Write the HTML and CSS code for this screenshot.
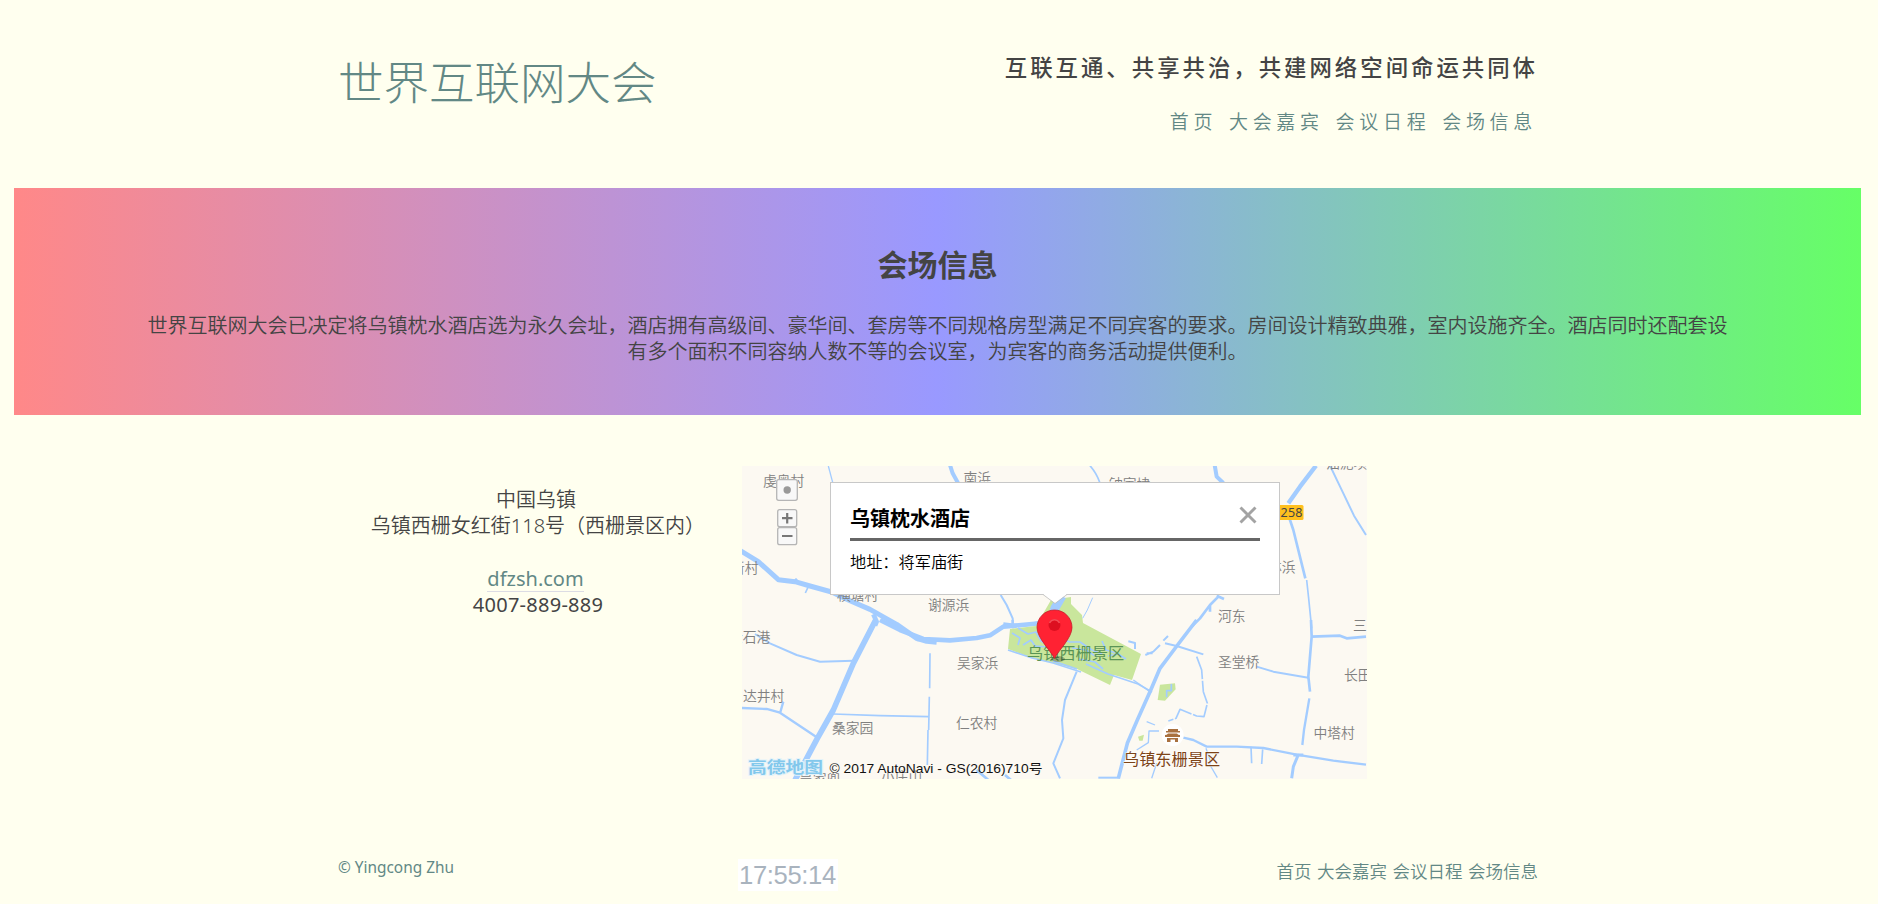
FILE: index.html
```html
<!DOCTYPE html>
<html lang="zh-CN">
<head>
<meta charset="utf-8">
<title>世界互联网大会</title>
<link rel="stylesheet" href="styles.css">
</head>
<body>
<header class="header wrap">
  <h1 class="title">世界互联网大会</h1>
  <div class="header-right">
    <p class="slogan">互联互通、共享共治，共建网络空间命运共同体</p>
    <nav class="nav"><a>首页</a><a>大会嘉宾</a><a>会议日程</a><a>会场信息</a></nav>
  </div>
</header>
<section class="banner">
  <h2 class="banner-title">会场信息</h2>
  <p class="banner-text">世界互联网大会已决定将乌镇枕水酒店选为永久会址，酒店拥有高级间、豪华间、套房等不同规格房型满足不同宾客的要求。房间设计精致典雅，室内设施齐全。酒店同时还配套设<br>有多个面积不同容纳人数不等的会议室，为宾客的商务活动提供便利。</p>
</section>
<main class="main wrap">
  <div class="contact">
    <p class="city">中国乌镇</p>
    <p>乌镇西栅女红街118号（西栅景区内）</p>
    <p class="contact-site"><a class="site">dfzsh.com</a></p>
    <p class="phone">4007-889-889</p>
  </div>
  <div class="map">
    <svg class="map-canvas" width="625" height="313" viewBox="0 0 625 313">
      <rect width="625" height="313" fill="#fcf9f2"/>
      <!-- north-west tile -->
      <g class="river" transform="translate(-12 -11) scale(.33333)">
        <path d="M295 33L308 82" stroke-width="4"/>
        <path d="M660 30L668 55L684 84" stroke-width="12"/>
        <path d="M30 286L85 320L145 374L195 380L240 393L305 411L355 435L420 463L500 508L560 550L590 559L620 562" stroke-width="15"/>
        <path d="M190 382l8-10 10 12M238 388l-12 26" stroke-width="5"/>
        <path d="M430 478L440 500L435 512" stroke-width="14"/>
        <path d="M812 420L830 450L848 490L850 520" stroke-width="6"/>
        <path d="M820 506L870 512L925 503" stroke-width="9"/>
      </g>
      <!-- south-west tile -->
      <g class="river" transform="translate(-12 154) scale(.33333)">
        <path d="M437 0L370 130L310 270L262 355L225 425L195 480" stroke-width="17"/>
        <path d="M450 0L510 30L580 57L660 61L740 54L780 46L820 20L930 10" stroke-width="14"/>
        <path d="M848 0v20M560 60h30" stroke-width="8"/>
        <path d="M75 42L120 70L200 105L270 125L370 122" stroke-width="6"/>
        <path d="M34 264L110 267L150 278L258 350M150 280L160 245" stroke-width="7"/>
        <path d="M310 282L450 287L596 290" stroke-width="5"/>
        <path d="M600 100L599 205M598 230L596 330M594 330L592 435" stroke-width="5"/>
        <path d="M740 450L775 480M825 465l18 15" stroke-width="8"/>
      </g>
      <!-- scenic area -->
      <path d="M268 163L294 160L309 134L329 131L329 138L340 149L341 157L399 188L390 214L372 209L368 219L335 203L290 192L266 183Z" fill="#c9e69c"/>
      <g class="river">
        <path d="M320 130l-7 12-3 10" stroke-width="9"/>
        <path d="M276 162l10 6 8-2 5 9 7 4M281 179l8-5 4 6 12 1M316 172l12 4 10 0 12 8 10 4M330 182l14 2 9 6M337 193l16 3 8 7M311 195l24 8M360 175l4 9 10 3M270 167l8 5-2 7" stroke-width="1.7"/>
        <path d="M344 198l22 10 30 10 14 8M366 190l10-2 8 5M266 184l24 8 21 5 28 9" stroke-width="1.6"/>
      </g>
      <!-- north-east tile -->
      <g class="river" transform="translate(308 -11) scale(.33333)">
        <path d="M120 32Q140 55 149 82" stroke-width="5"/>
        <path d="M494 30L500 65L520 84" stroke-width="12"/>
        <path d="M798 32L750 95L715 145" stroke-width="13"/>
        <path d="M715 180L730 225L766 370" stroke-width="8"/>
        <path d="M770 375L776 430L785 520" stroke-width="5"/>
        <path d="M840 32L880 115L912 182L948 240" stroke-width="6"/>
        <path d="M508 422L480 450L450 490L425 515M480 450v20M500 422l22 10" stroke-width="8"/>
        <path d="M128 428L112 465L98 490" stroke-width="3"/>
      </g>
      <!-- south-east tile -->
      <g class="river" transform="translate(308 154) scale(.33333)">
        <path d="M440 0L385 72L330 145L300 215L262 300L232 370L205 475" stroke-width="11"/>
        <path d="M380 78L460 103M620 140L670 155L775 173" stroke-width="6"/>
        <path d="M286 105L310 95L330 75M290 100l18 0M340 62l14-14M345 70l35 8M235 64l20 5v18" stroke-width="6"/>
        <path d="M250 180L300 215" stroke-width="4"/>
        <path d="M783 0L785 50L775 170L780 215" stroke-width="8"/>
        <path d="M785 50L870 47L890 55L948 50" stroke-width="8"/>
        <path d="M778 235L762 330L757 375" stroke-width="7"/>
        <path d="M400 353L430 360L470 380L560 380L640 384L740 404L850 422L948 434" stroke-width="7"/>
        <path d="M745 404L730 440L725 475M730 405h30" stroke-width="9"/>
        <path d="M603 380L605 430M638 388L635 432" stroke-width="5"/>
        <path d="M80 155L45 240L36 300L40 355L10 430L30 475" stroke-width="6"/>
        <path d="M440 110L455 150L460 215L472 250L462 290L440 288L390 268L378 295L355 303" stroke-width="5" stroke-dasharray="70 5"/>
        <path d="M290 305l25 10M260 390l35-22 2-35 30 0M468 385l12 35 0 15 22 38M320 430l-15 45" stroke-width="4"/>
        <path d="M145 473L210 473" stroke-width="6"/>
        <path d="M330 194L375 190L377 208L345 242L323 240Z" fill="#c9e69c" stroke="none"/>
        <path d="M350 232v-20l14 0v-20" stroke-width="5"/>
        <path d="M264 350l18-6-4 18-10 0z" fill="#c9e69c" stroke="none"/>
      </g>
      <g class="place">
        <text x="21" y="19.500">虔奥村</text>
        <text x="221.500" y="16.500">南浜</text>
        <text x="-11" y="107">新村</text>
        <text x="95" y="133.500">横塘村</text>
        <text x="186" y="143.500">谢源浜</text>
        <text x="367" y="23">钟家埭</text>
        <text x="584" y="1.500">油泥坝</text>
        <text x="526" y="106">林浜</text>
        <text x="476" y="154.500">河东</text>
        <text x="611" y="164">三</text>
        <text x="-13" y="176">金石港</text>
        <text x="215" y="202">吴家浜</text>
        <text x="1" y="234.500">达井村</text>
        <text x="90" y="267">桑家园</text>
        <text x="214" y="262">仁农村</text>
        <text x="57" y="317.500">吴家兜</text>
        <text x="139" y="316">小庄山</text>
        <text x="476" y="201">圣堂桥</text>
        <text x="602" y="213.500">长田</text>
        <text x="571.500" y="272">中塔村</text>
      </g>
      <text class="scenic scenic-west" x="285" y="193">乌镇西栅景区</text>
      <circle cx="430.600" cy="269" r="11" fill="#fff"/>
      <path d="M424 265h2v-2h10v2h2v1.500h-14zM423 269q2 0 3-1.500h9q1 1.500 3 1.500v2h-15zM425 272h11v4h-3v-2.500h-4.500V276H425z" fill="#a9713f"/>
      <text class="scenic scenic-east" x="381" y="299">乌镇东栅景区</text>
      <rect x="533" y="39" width="28.500" height="15" rx="1.500" fill="#ffc01e"/>
      <text class="road" x="538.500" y="51" textLength="22">258</text>
      <ellipse cx="316" cy="193" rx="7" ry="3" fill="#000" opacity=".25"/>
      <path d="M312.500 192.500C309 185 295 172 295 161.500a17.500 17.500 0 0 1 35 0C330 172 316 185 312.500 192.500Z" fill="#ff2233" stroke="#c4202c" stroke-width=".8"/>
      <circle cx="312.500" cy="159" r="6" fill="#dd0f20"/>
      <path d="M307.500 157a5.500 5.500 0 0 1 10 0" fill="none" stroke="#f44a55" stroke-width="1.500"/>
      <text class="amap" x="6" y="307" textLength="75" lengthAdjust="spacingAndGlyphs">高德地图</text>
      <text class="copyright" x="87.500" y="307" textLength="213" lengthAdjust="spacingAndGlyphs">© 2017 AutoNavi - GS(2016)710号</text>
      <g fill="#f8f8f8" stroke="#b5b5b5" stroke-width="1.300">
        <rect x="34.700" y="13.700" width="20.600" height="20.600" rx="2"/>
        <rect x="35.700" y="43.700" width="19" height="17" rx="2"/>
        <rect x="35.700" y="61.700" width="19" height="17" rx="2"/>
      </g>
      <circle cx="45.200" cy="24" r="3.700" fill="#999"/>
      <path d="M40 52.200h10.500M45.200 47v10.500M40 70h10.500" stroke="#777" stroke-width="2.200"/>
    </svg>
    <div class="popup">
      <h3 class="popup-title">乌镇枕水酒店</h3>
      <p class="popup-text">地址：将军庙街</p>
      <svg class="popup-close" width="18" height="18" viewBox="0 0 18 18"><path d="M1.500 1.500l15 15M16.500 1.500l-15 15" stroke="#a3a3a3" stroke-width="2.900"/></svg>
      <svg class="popup-tip" width="24" height="10" viewBox="0 0 24 10"><path d="M0 0L12 9.500L24 0Z" fill="#fff"/><path d="M0 .5L12 9.500L24 .5" fill="none" stroke="#bbb" stroke-width=".8"/></svg>
    </div>
  </div>
</main>
<footer class="footer wrap">
  <span class="owner">© Yingcong Zhu</span>
  <span class="clock">17:55:14</span>
  <nav class="footer-nav"><a>首页</a> <a>大会嘉宾</a> <a>会议日程</a> <a>会场信息</a></nav>
</footer>
</body>
</html>
```
FILE: styles.css
```css
* { box-sizing: border-box; }
html { overflow: hidden; }
body {
  margin: 0;
  width: 1878px;
  height: 904px;
  overflow: hidden;
  background: #ffffef;
  color: #444;
  font-family: "Noto Sans", "Noto Sans CJK SC", sans-serif;
  font-size: 20px;
  line-height: 26px;
}
h1, h2, h3, p { margin: 0; }
.wrap { width: 1200px; margin-left: 338px; }
.header { display: flex; justify-content: space-between; height: 188px; }
.title {
  padding-top: 47px;
  font-family: "Noto Sans CJK SC", sans-serif;
  font-size: 45.5px;
  font-weight: 300;
  line-height: 66px;
  color: #628885;
}
.header-right { display: flex; flex-direction: column; align-items: flex-end; padding-top: 53px; }
.slogan {
  font-family: "Noto Sans CJK SC", sans-serif;
  font-size: 22.4px;
  font-weight: 500;
  letter-spacing: 3px;
}
.nav {
  display: flex;
  gap: 11.8px;
  margin-top: 29px;
  margin-right: 1px;
  font-family: "Noto Sans CJK SC", sans-serif;
  font-size: 19px;
  font-weight: 350;
  letter-spacing: 4.7px;
  color: #628885;
}
.banner {
  width: 1847px;
  height: 227px;
  margin-left: 14px;
  padding-top: 55px;
  text-align: center;
  background: linear-gradient(to right, #ff8888, #9999ff 50%, #66ff66);
}
.banner-title { font-family: "Noto Sans CJK SC", sans-serif; font-size: 30px; line-height: 40px; font-weight: 700; }
.banner-text { margin-top: 29px; font-family: "Noto Sans CJK SC", sans-serif; font-weight: 350; white-space: nowrap; }
.main { display: flex; gap: 4px; padding-top: 51px; }
.contact { width: 400px; padding-top: 21px; text-align: center; font-weight: 350; white-space: nowrap; }
.city { padding-right: 4px; }
.contact-site { margin-top: 27px; padding-right: 5px; }
.contact-site, .phone { font-weight: 400; }
.phone { letter-spacing: .25px; }
.site { display: inline-block; height: 26px; color: #628885; border-bottom: 1px solid #dcdce4; }
.map { position: relative; width: 625px; height: 313px; overflow: hidden; }
.map-canvas { display: block; }
.river { fill: none; stroke: #a3ccff; stroke-linejoin: round; }
.place { font: 350 13.8px "Noto Sans CJK SC", sans-serif; fill: #808080; }
.scenic { font: 400 16.2px "Noto Sans CJK SC", sans-serif; stroke: #fff; stroke-opacity: .6; stroke-width: 1.5px; paint-order: stroke; }
.scenic-west { fill: #5a9456; stroke: none; }
.scenic-east { fill: #7d4316; }
.road { font: 12.5px "Noto Sans", sans-serif; fill: #444; }
.amap { font: 700 15.5px "Noto Sans CJK SC", sans-serif; fill: #83c8ec; stroke: #e4f3fa; stroke-width: 2px; paint-order: stroke; }
.copyright { font: 13px "Liberation Sans", "Noto Sans CJK SC", sans-serif; fill: #111; }
.popup {
  position: absolute;
  left: 88px;
  top: 16px;
  width: 450px;
  height: 113px;
  padding: 20px 19px 0;
  border: 1px solid #c8c8c8;
  background: #fff;
  color: #000;
  font-family: "Noto Sans CJK SC", sans-serif;
}
.popup-title { height: 38px; font-size: 20px; line-height: 29px; font-weight: 700; border-bottom: 3px solid #666; }
.popup-text { margin-top: 7px; font-size: 16.2px; font-weight: 350; }
.popup-close { position: absolute; right: 22px; top: 23px; }
.popup-tip { position: absolute; left: 212px; top: 111px; }
.footer { display: flex; align-items: flex-start; padding-top: 80px; color: #628885; }
.owner { width: 400px; margin-top: -4px; font-size: 15.4px; }
.clock {
  width: 100px;
  height: 32px;
  padding-left: 1px;
  font: 25.6px/32px "Liberation Sans", sans-serif;
  letter-spacing: -.35px;
  color: #a9b3be;
  background: #fff;
}
.footer-nav { margin-left: auto; margin-top: -1px; font-family: "Noto Sans CJK SC", sans-serif; font-size: 17.5px; font-weight: 350; word-spacing: 1.6px; white-space: nowrap; }
```
